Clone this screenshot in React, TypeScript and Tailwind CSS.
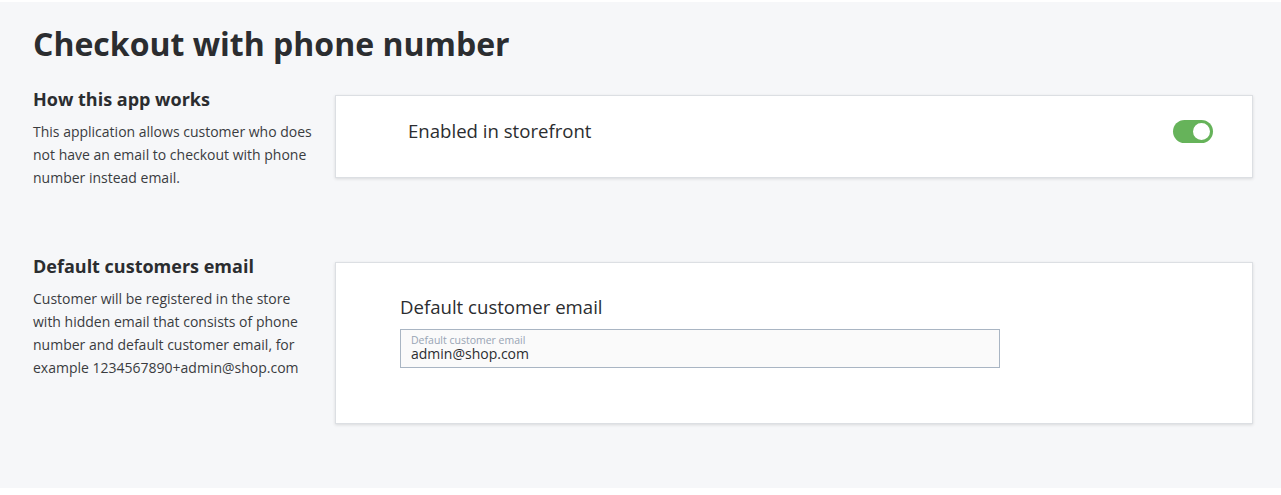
import React from 'react';

function Toggle({ on }: { on: boolean }) {
  return (
    <button
      className={`relative w-[40px] h-[23px] rounded-full shrink-0 ${on ? 'bg-[#66b35a]' : 'bg-gray-300'}`}
      aria-pressed={on}
    >
      {/* knob */}
      <span className="absolute right-[1px] top-[1px] w-[21px] h-[21px] rounded-full bg-white border-2 border-[#66b35a]" />
    </button>
  );
}

function Section({
  title,
  text,
  children,
  className = '',
}: {
  title: string;
  text: string;
  children: React.ReactNode;
  className?: string;
}) {
  return (
    <div className={`flex items-start ${className}`}>
      <div className="w-[302px] shrink-0 pr-[20px]">
        <h2 className="text-[18px] leading-[24px] font-bold text-[#2b2d30]">{title}</h2>
        <p className="mt-[9px] text-[14px] leading-[23px] text-[#3a3c3f]">{text}</p>
      </div>
      <div className="flex-1 mt-[8px] bg-white border border-[#dcdfe3] shadow-[0_1px_3px_rgba(0,0,0,0.12)]">
        {children}
      </div>
    </div>
  );
}

export default function App() {
  return (
    <div className="min-h-[495px] bg-white pt-[2px] font-['Open_Sans',sans-serif]">
      <div className="h-[486px] bg-[#f6f7f9] pl-[33px] pr-[28px] pt-[22px]">
        <h1 className="text-[32px] leading-[40px] font-bold text-[#2b2d30]">Checkout with phone number</h1>

        <Section
          className="mt-[23px]"
          title="How this app works"
          text="This application allows customer who does not have an email to checkout with phone number instead email."
        >
          <div className="flex items-center justify-between pl-[72px] pr-[39px] pt-[23px] pb-[34px]">
            <span className="text-[18.6px] leading-[24px] font-medium text-[#2b2d30]">Enabled in storefront</span>
            <Toggle on />
          </div>
        </Section>

        <Section
          className="mt-[65px]"
          title="Default customers email"
          text="Customer will be registered in the store with hidden email that consists of phone number and default customer email, for example 1234567890+admin@shop.com"
        >
          <div className="pl-[64px] pt-[32px] pb-[55px]">
            <div className="text-[18.6px] leading-[24px] font-medium text-[#2b2d30]">Default customer email</div>
            {/* Input */}
            <label className="mt-[10px] block w-[600px] h-[39px] border border-[#a9b5c3] bg-[#fafafa] pl-[10px] pt-[4px]">
              <span className="block text-[10.5px] leading-[12px] text-[#98a4b4]">Default customer email</span>
              <input
                className="block w-full bg-transparent outline-none text-[14px] leading-[16px] text-[#2b2d30]"
                defaultValue="admin@shop.com"
              />
            </label>
          </div>
        </Section>
      </div>
    </div>
  );
}
